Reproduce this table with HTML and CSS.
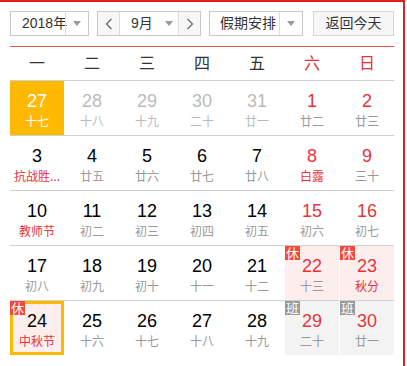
FILE: index.html
```html
<!DOCTYPE html>
<html lang="zh">
<head>
<meta charset="utf-8">
<link rel="stylesheet" href="styles.css">
</head>
<body>
<div class="panel">
  <div class="controls">
    <div class="select year">
      <span class="sel-text">2018年</span>
      <span class="sel-arrow"><i class="tri"></i></span>
    </div>
    <div class="select month">
      <span class="nav"><svg width="8" height="12" viewBox="0 0 8 12"><path d="M6.5 1 L1.5 6 L6.5 11" fill="none" stroke="#666" stroke-width="1.2"/></svg></span>
      <span class="month-val"><span class="sel-text">9月</span><i class="tri"></i></span>
      <span class="nav"><svg width="8" height="12" viewBox="0 0 8 12"><path d="M1.5 1 L6.5 6 L1.5 11" fill="none" stroke="#666" stroke-width="1.2"/></svg></span>
    </div>
    <div class="select holiday">
      <span class="sel-text">假期安排</span>
      <span class="sel-arrow"><i class="tri"></i></span>
    </div>
    <div class="btn-today">返回今天</div>
  </div>

  <div class="calendar">
    <div class="week-head">
      <span>一</span><span>二</span><span>三</span><span>四</span><span>五</span><span class="red">六</span><span class="red">日</span>
    </div>

    <div class="row">
      <div class="cell today"><b>27</b><em>十七</em></div>
      <div class="cell other"><b>28</b><em>十八</em></div>
      <div class="cell other"><b>29</b><em>十九</em></div>
      <div class="cell other"><b>30</b><em>二十</em></div>
      <div class="cell other"><b>31</b><em>廿一</em></div>
      <div class="cell we"><b>1</b><em>廿二</em></div>
      <div class="cell we"><b>2</b><em>廿三</em></div>
    </div>

    <div class="row">
      <div class="cell"><b>3</b><em class="fest">抗战胜...</em></div>
      <div class="cell"><b>4</b><em>廿五</em></div>
      <div class="cell"><b>5</b><em>廿六</em></div>
      <div class="cell"><b>6</b><em>廿七</em></div>
      <div class="cell"><b>7</b><em>廿八</em></div>
      <div class="cell we"><b>8</b><em class="fest">白露</em></div>
      <div class="cell we"><b>9</b><em>三十</em></div>
    </div>

    <div class="row">
      <div class="cell"><b>10</b><em class="fest">教师节</em></div>
      <div class="cell"><b>11</b><em>初二</em></div>
      <div class="cell"><b>12</b><em>初三</em></div>
      <div class="cell"><b>13</b><em>初四</em></div>
      <div class="cell"><b>14</b><em>初五</em></div>
      <div class="cell we"><b>15</b><em>初六</em></div>
      <div class="cell we"><b>16</b><em>初七</em></div>
    </div>

    <div class="row">
      <div class="cell"><b>17</b><em>初八</em></div>
      <div class="cell"><b>18</b><em>初九</em></div>
      <div class="cell"><b>19</b><em>初十</em></div>
      <div class="cell"><b>20</b><em>十一</em></div>
      <div class="cell"><b>21</b><em>十二</em></div>
      <div class="cell we rest"><span class="badge">休</span><b>22</b><em>十三</em></div>
      <div class="cell we rest"><span class="badge">休</span><b>23</b><em class="fest">秋分</em></div>
    </div>

    <div class="row last">
      <div class="cell rest picked"><span class="badge">休</span><b>24</b><em class="fest">中秋节</em></div>
      <div class="cell"><b>25</b><em>十六</em></div>
      <div class="cell"><b>26</b><em>十七</em></div>
      <div class="cell"><b>27</b><em>十八</em></div>
      <div class="cell"><b>28</b><em>十九</em></div>
      <div class="cell we work"><span class="badge">班</span><b>29</b><em>二十</em></div>
      <div class="cell we work"><span class="badge">班</span><b>30</b><em>廿一</em></div>
    </div>
  </div>
</div>
</body>
</html>
```

FILE: styles.css
```css
* { box-sizing: border-box; }
html, body { margin: 0; padding: 0; background: #fff; }
body {
  font-family: "Liberation Sans", "Noto Sans CJK SC", sans-serif;
  color: #333;
}
.panel {
  width: 405px;
  height: 366px;
  border-top: 2px solid #e0201e;
  border-right: 2px solid #e0201e;
  padding: 9px 0 0 10px;
}
.controls {
  display: flex;
  height: 25px;
  width: 384px;
}
.select {
  display: flex;
  height: 25px;
  border: 1px solid #c8c8c8;
  background: #fff;
  font-size: 14px;
  line-height: 23px;
  color: #333;
}
.sel-text { white-space: nowrap; }
.tri {
  display: inline-block;
  width: 0; height: 0;
  border-left: 4px solid transparent;
  border-right: 4px solid transparent;
  border-top: 5px solid #999;
}
.sel-arrow {
  display: flex;
  align-items: center;
  justify-content: center;
  border-left: 1px solid #dcdcdc;
}
.year { width: 79px; }
.year .sel-text { width: 54px; padding-left: 11px; }
.year .sel-arrow { width: 23px; }
.month { width: 104px; margin-left: 8px; }
.nav {
  width: 21px;
  display: flex;
  align-items: center;
  justify-content: center;
  background: #f7f7f7;
}
.month-val {
  width: 60px;
  display: flex;
  align-items: center;
  border-left: 1px solid #dcdcdc;
  border-right: 1px solid #dcdcdc;
  padding-left: 11px;
}
.month-val .sel-text { width: 34px; }
.holiday { width: 94px; margin-left: 8px; }
.holiday .sel-text { width: 69px; padding-left: 10px; }
.holiday .sel-arrow { width: 23px; }
.btn-today {
  width: 81px;
  margin-left: 10px;
  height: 25px;
  border: 1px solid #d6d6d6;
  background: #f6f6f6;
  font-size: 14px;
  line-height: 23px;
  text-align: center;
  color: #333;
}

.calendar {
  width: 384px;
  margin-top: 10px;
  border-top: 1px solid #e8564a;
}
.week-head {
  display: grid;
  grid-template-columns: repeat(7, 54px);
  column-gap: 1px;
  height: 34px;
  padding-bottom: 3px;
  border-bottom: 1px solid #d0d0d0;
  font-family: "Noto Sans CJK SC", sans-serif;
  font-size: 16px;
  line-height: 30px;
  text-align: center;
  color: #333;
}
.week-head .red { color: #e8333a; }

.row {
  display: grid;
  grid-template-columns: repeat(7, 54px);
  column-gap: 1px;
  height: 55px;
  border-bottom: 1px solid #d0d0d0;
}
.row.last { border-bottom: none; }
.cell {
  position: relative;
  height: 54px;
  padding-top: 9px;
  text-align: center;
}
.cell b {
  display: block;
  font-weight: normal;
  font-size: 18px;
  line-height: 22px;
  color: #000;
}
.cell em {
  display: block;
  font-style: normal;
  font-family: "Noto Sans CJK SC", sans-serif;
  font-size: 12px;
  line-height: 18px;
  color: #999;
  white-space: nowrap;
}
.cell.other b, .cell.other em { color: #bbb; }
.cell.we b { color: #e8333a; }
.cell em.fest { color: #e8333a; }
.cell.today { background: #ffb900; }
.cell.today b, .cell.today em { color: #fff; }
.cell.rest { background: #fdeeee; }
.cell.work { background: #f3f3f3; }
.cell.picked {
  border: 3px solid #ffb900;
  padding-top: 6px;
}
.badge {
  position: absolute;
  left: 0;
  top: 0;
  width: 15px;
  height: 14px;
  font-family: "Noto Sans CJK SC", sans-serif;
  font-size: 13px;
  line-height: 14px;
  text-align: center;
  color: #fff;
  background: #f24a3a;
}
.work .badge { background: #999; }
.picked .badge { left: -3px; top: -3px; }
```
